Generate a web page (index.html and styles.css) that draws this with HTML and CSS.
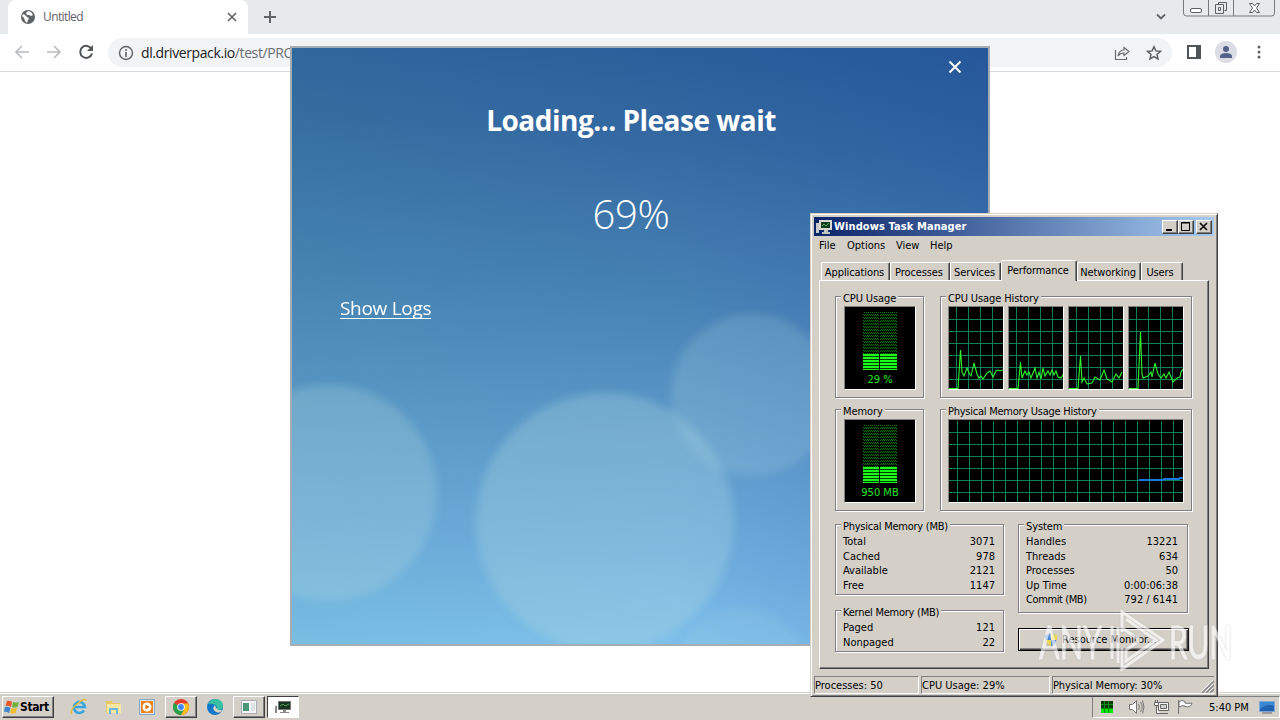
FILE: index.html
```html
<!DOCTYPE html>
<html lang="en">

<head>
    <meta charset="UTF-8">
    <meta name="viewport" content="width=device-width, initial-scale=1.0">
    <title>Untitled</title>
    <link rel="stylesheet" href="styles.css">
</head>

<body>
    <!-- Browser -->
    <div class="tab-strip">
        <div class="browser-tab">
            <svg class="globe" width="16" height="16" viewBox="0 0 16 16">
                <circle cx="8" cy="8" r="7" fill="#5f6368"/>
                <path d="M3 5l2 1 2 2 2 1-1 2-1 3-2-2-1-3-2-2zM8 2l3 1 2 3-2 1-2-1-2 0-1-2z" fill="#fff"/>
            </svg>
            <span class="tab-title">Untitled</span>
            <svg width="10" height="10" viewBox="0 0 10 10"><path d="M1 1l8 8M9 1L1 9" stroke="#5f6368" stroke-width="1.600"/></svg>
        </div>
        <svg class="new-tab" width="14" height="14" viewBox="0 0 14 14"><path d="M7 1v12M1 7h12" stroke="#5f6368" stroke-width="2"/></svg>
        <svg class="tab-search" width="12" height="8" viewBox="0 0 12 8"><path d="M2 1.500l4 4 4-4" fill="none" stroke="#5f6368" stroke-width="1.800"/></svg>
        <div class="caption-buttons">
            <svg width="92" height="17" viewBox="0 0 92 17" fill="none" stroke="#77797c">
                <path d="M.500 0v13q0 3 3 3h85q3 0 3-3V0M25.500 0v16M50.500 0v16"/>
                <rect x="7.500" y="8.500" width="11" height="4" rx="1.500" fill="#fff" stroke="#5a5d63"/>
                <path d="M35.500 4.500v-2h8v8h-2M32.500 4.500h8v9h-8zM35.500 7.500h2v3h-2z" stroke="#5a5d63"/>
                <path d="M66.500 3.500h3l2 2.500 2-2.500h3l-3 4.500 3 4.500h-3l-2-2.500-2 2.500h-3l3-4.500z" fill="#fff" stroke="#5a5d63"/>
            </svg>
        </div>
    </div>
    <div class="toolbar">
        <svg width="16" height="16" viewBox="0 0 16 16"><path d="M15 8H2M8 2L2 8l6 6" fill="none" stroke="#babcbe" stroke-width="1.700"/></svg>
        <svg width="16" height="16" viewBox="0 0 16 16"><path d="M1 8h13M8 2l6 6-6 6" fill="none" stroke="#babcbe" stroke-width="1.700"/></svg>
        <svg width="16" height="16" viewBox="0 0 16 16"><path d="M13.500 5A6 6 0 1 0 14 9.500" fill="none" stroke="#505357" stroke-width="2"/><path d="M15 1v6H9z" fill="#505357"/></svg>
        <div class="address">
            <svg width="16" height="16" viewBox="0 0 16 16"><circle cx="8" cy="8" r="6.500" fill="none" stroke="#5f6368" stroke-width="1.400"/><path d="M8 7v5M8 4v1.700" stroke="#5f6368" stroke-width="1.600"/></svg>
            <span class="url">dl.driverpack.io<span>/test/PRO</span></span>
            <svg class="share" width="16" height="16" viewBox="0 0 16 16" fill="none" stroke="#66696e" stroke-width="1.200"><path d="M1.500 5v9.500h11V12"/><path d="M4 11q1-6 6-6V2.500l5 4-5 4V8q-4 0-6 3z"/></svg>
            <svg width="16" height="16" viewBox="0 0 16 16"><path d="M8 1.700l1.900 4.200 4.500.5-3.400 3 1 4.500L8 11.600l-4 2.300 1-4.500-3.400-3 4.500-.5z" fill="none" stroke="#5f6368" stroke-width="1.500"/></svg>
        </div>
        <svg class="side-panel" width="14" height="14" viewBox="0 0 14 14"><rect x="1" y="1" width="12" height="12" fill="none" stroke="#505357" stroke-width="2"/><path d="M9 1h4v12H9z" fill="#505357"/></svg>
        <svg class="profile" width="22" height="22" viewBox="0 0 22 22"><circle cx="11" cy="11" r="11" fill="#dadde3"/><circle cx="11" cy="8" r="3" fill="#53618a"/><path d="M5 17v-1.500q0-3.500 6-3.500t6 3.500V17z" fill="#53618a"/></svg>
        <svg width="4" height="14" viewBox="0 0 4 14" fill="#5f6368"><circle cx="2" cy="2" r="1.500"/><circle cx="2" cy="7" r="1.500"/><circle cx="2" cy="12" r="1.500"/></svg>
    </div>

    <!-- DriverPack window -->
    <div class="loader">
        <svg class="bubbles" width="696" height="596" viewBox="0 0 696 596">
            <defs>
                <filter id="soft"><feGaussianBlur stdDeviation="4"/></filter>
            </defs>
            <g fill="#b0dbe0" filter="url(#soft)">
                <circle cx="37" cy="445" r="108" opacity=".27"/>
                <circle cx="313" cy="474" r="129" opacity=".3"/>
                <circle cx="460" cy="347" r="81" opacity=".2"/>
                <circle cx="450" cy="625" r="65" opacity=".14"/>
            </g>
        </svg>
        <svg class="loader-close" width="14" height="14" viewBox="0 0 14 14"><path d="M1.500 1.500l11 11M12.500 1.500l-11 11" stroke="#fff" stroke-width="1.900"/></svg>
        <h1>Loading... Please wait</h1>
        <div class="percent">69%</div>
        <a class="show-logs">Show Logs</a>
    </div>

    <!-- Task Manager window -->
    <div class="task-manager">
        <div class="title-bar">
            <svg width="16" height="16" viewBox="0 0 16 16"><path d="M0 4h3v10H0z" fill="#c8ccc8"/><path d="M3 1h13v10H3z" fill="#d8d8d0"/><path d="M5 3h9v6H5z" fill="#123c20"/><path d="M6 7l2-2 2 2 3-3" stroke="#4fa65c" fill="none"/><path d="M8 11h4v2h2v2H6v-2h2z" fill="#c0c4c0"/></svg>
            <span class="title">Windows Task Manager</span>
            <div class="win-btn"><svg width="13" height="11" viewBox="0 0 13 11"><path d="M3 9h6" stroke="#000" stroke-width="2"/></svg></div>
            <div class="win-btn"><svg width="13" height="11" viewBox="0 0 13 11"><path d="M2.500 1.500h8v8h-8zM2 2h9" stroke="#000" fill="none"/></svg></div>
            <div class="win-btn close"><svg width="13" height="11" viewBox="0 0 13 11"><path d="M3 2l7 7M10 2L3 9" stroke="#000" stroke-width="1.600"/></svg></div>
        </div>
        <div class="menu">
            <span class="m-file">File</span>
            <span class="m-options">Options</span>
            <span class="m-view">View</span>
            <span class="m-help">Help</span>
        </div>
        <div class="tabs">
            <div class="tab t-app">Applications</div>
            <div class="tab t-proc">Processes</div>
            <div class="tab t-serv">Services</div>
            <div class="tab active">Performance</div>
            <div class="tab t-net">Networking</div>
            <div class="tab t-users">Users</div>
        </div>
        <div class="panel">
            <div class="graphs">
                <div class="group">
                    <div class="legend">CPU Usage</div>
                    <div class="screen meter">
                        <div class="bars"><div class="fill"></div></div>
                        <span>29 %</span>
                    </div>
                </div>
                <div class="group">
                    <div class="legend">CPU Usage History</div>
                    <div class="charts">
                        <div class="screen"><svg width="54" height="82" viewBox="0 0 54 82">
                            <path class="grid" d="M7.500 0v82M19.500 0v82M31.500 0v82M43.500 0v82M0 12.500h54M0 24.500h54M0 36.500h54M0 48.500h54M0 60.500h54M0 72.500h54"/>
                            <path class="line" d="M0 81.500H9L11.500 43l1.500 22 2 4 3-8 2 5 2 3 3-13 3 11 2 4 2-2 2 3 4-6 3-2 3 6 3-6 2-1 2 1 3-1"/>
                        </svg></div>
                        <div class="screen"><svg width="54" height="82" viewBox="0 0 54 82">
                            <path class="grid" d="M7.500 0v82M19.500 0v82M31.500 0v82M43.500 0v82M0 12.500h54M0 24.500h54M0 36.500h54M0 48.500h54M0 60.500h54M0 72.500h54"/>
                            <path class="line" d="M0 81.500H9L11.500 55l1.500 16 3-7 2 4 2-3 2 6 2-5 2-5 2 10 2-6 2 7 2-11 2 8 3-5 2 4 2-5 2 5 2-4 2 6 3 1 2-3 1-3"/>
                        </svg></div>
                        <div class="screen"><svg width="54" height="82" viewBox="0 0 54 82">
                            <path class="grid" d="M7.500 0v82M19.500 0v82M31.500 0v82M43.500 0v82M0 12.500h54M0 24.500h54M0 36.500h54M0 48.500h54M0 60.500h54M0 72.500h54"/>
                            <path class="line" d="M0 81.500H9L11.500 49l1.500 26 2-4 3 6 5-1 3-6 5 3 4-10 3 9 5 3 4-8 3 4 3-6"/>
                        </svg></div>
                        <div class="screen"><svg width="54" height="82" viewBox="0 0 54 82">
                            <path class="grid" d="M7.500 0v82M19.500 0v82M31.500 0v82M43.500 0v82M0 12.500h54M0 24.500h54M0 36.500h54M0 48.500h54M0 60.500h54M0 72.500h54"/>
                            <path class="line" d="M0 81.500H9L11.500 25l1.500 42 1 4 5-2 3-4 1 5 3-14 3 11 3 4 3-4 2 4 3-6 4 10 4-4 3-1 1-5 2-3"/>
                        </svg></div>
                    </div>
                </div>
                <div class="group">
                    <div class="legend">Memory</div>
                    <div class="screen meter">
                        <div class="bars"><div class="fill"></div></div>
                        <span>950 MB</span>
                    </div>
                </div>
                <div class="group">
                    <div class="legend tight">Physical Memory Usage History</div>
                    <div class="screen"><svg width="234" height="82" viewBox="0 0 234 82">
                        <defs>
                            <pattern id="cells" x="8" y="12" width="12" height="12" patternUnits="userSpaceOnUse"><path d="M.5 0v12M0 .5h12" stroke="#0a8055"/></pattern>
                        </defs>
                        <rect y="1" width="234" height="81" fill="url(#cells)"/>
                        <path d="M190 60h24l1-1h15l1-1h3" fill="none" stroke="#1878e0" stroke-width="2"/>
                    </svg></div>
                </div>
            </div>
            <div class="details">
                <div class="column">
                    <div class="group stats">
                        <div class="legend tight">Physical Memory (MB)</div>
                        <div class="row"><span>Total</span><span>3071</span></div>
                        <div class="row"><span>Cached</span><span>978</span></div>
                        <div class="row"><span>Available</span><span>2121</span></div>
                        <div class="row"><span>Free</span><span>1147</span></div>
                    </div>
                    <div class="group stats kernel">
                        <div class="legend tight">Kernel Memory (MB)</div>
                        <div class="row"><span>Paged</span><span>121</span></div>
                        <div class="row"><span>Nonpaged</span><span>22</span></div>
                    </div>
                </div>
                <div class="column">
                    <div class="group stats system">
                        <div class="legend">System</div>
                        <div class="row"><span>Handles</span><span>13221</span></div>
                        <div class="row"><span>Threads</span><span>634</span></div>
                        <div class="row"><span>Processes</span><span>50</span></div>
                        <div class="row"><span>Up Time</span><span>0:00:06:38</span></div>
                        <div class="row"><span class="commit">Commit (MB)</span><span>792 / 6141</span></div>
                    </div>
                    <div class="monitor-btn">
                        <svg width="14" height="16" viewBox="0 0 14 16"><path d="M7 1q3 2 6 2 0 9-6 12Q1 12 1 3q3 0 6-2z" fill="#3d7edb"/><path d="M7 1q3 2 6 2v5H7zM1.500 8H7v7Q3 13 1.500 8z" fill="#efd84a"/></svg>
                        Resource Monitor...
                    </div>
                </div>
            </div>
        </div>
        <div class="status">
            <div class="s-proc">Processes: 50</div>
            <div class="s-cpu">CPU Usage: 29%</div>
            <div class="s-mem">
                <span>Physical Memory: 30%</span>
                <svg width="13" height="13" viewBox="0 0 13 13"><path d="M1 13L13 1M5 13l8-8M9 13l4-4" stroke="#808080" stroke-width="1.500"/><path d="M0 12L12 0M4 12l8-8M8 12l4-4" stroke="#fff"/></svg>
            </div>
        </div>
    </div>

    <!-- Taskbar -->
    <div class="taskbar">
        <div class="start">
            <svg width="16" height="16" viewBox="0 0 16 16"><path d="M3 2q3-1 5 1L7 8Q4 6 1.500 7z" fill="#e8562a"/><path d="M9 3q3 1 6 0l-1.500 5Q10 9 8 8z" fill="#72b03c"/><path d="M1 8q3-1 5.500 1L5 14q-3-2-5-1z" fill="#3f86d0"/><path d="M7.500 9q3 1 5.500 0l-1.500 5q-3 1-5.500 0z" fill="#f2bd2c"/></svg>
            <span>Start</span>
        </div>
        <div class="task">
            <svg width="18" height="18" viewBox="0 0 18 18"><path d="M14 12.500a5.500 5.500 0 1 1 .9-3.500H5" fill="none" stroke="#35a5e0" stroke-width="2.600"/><path d="M2 16Q-1 13 7 6t9-3" fill="none" stroke="#e5bb3e" stroke-width="1.500"/></svg>
        </div>
        <div class="task">
            <svg width="17" height="16" viewBox="0 0 17 16"><path d="M1 2h6l1 2h7v10H1z" fill="#e9c765"/><path d="M2 5h14v9H2z" fill="#f8e7a2"/><path d="M4 15V9h9v6h-2v-4H6v4z" fill="#6fb7de"/></svg>
        </div>
        <div class="task">
            <svg width="16" height="16" viewBox="0 0 16 16"><path d="M.5.500h15v15H.5z" fill="#d7e6f5" stroke="#85a9cc"/><path d="M2 2h12v12H2z" fill="#f08319"/><circle cx="8" cy="8" r="4.500" fill="#fff"/><path d="M6.500 5.500v5L10.500 8z" fill="#e86d10"/></svg>
        </div>
        <div class="task raised">
            <svg width="16" height="16" viewBox="0 0 16 16"><circle cx="8" cy="8" r="8" fill="#e33b2e"/><path d="M1.070 4A8 8 0 0 0 8 16l3.500-6z" fill="#2ba24c"/><path d="M15 4.500A8 8 0 0 1 8 16l3.500-6L8 4.500z" fill="#fbc116"/><circle cx="8" cy="8" r="3.800" fill="#fff"/><circle cx="8" cy="8" r="2.900" fill="#4285f4"/></svg>
        </div>
        <div class="task">
            <svg width="16" height="16" viewBox="0 0 16 16"><circle cx="8" cy="8" r="8" fill="#1377c9"/><path d="M1 5q3-5 8-5 7 1 7 7 0 4-4 4-4 0-2-3Q8 4 1 5z" fill="#38c1a0"/><path d="M8 6q-4 4 1 7 3 1 5 0l1-2q-6 1-7-5z" fill="#d4d0c8"/></svg>
        </div>
        <div class="task raised">
            <svg width="16" height="14" viewBox="0 0 16 14"><path d="M.5.500h15v13H.5z" fill="#f4f6f7" stroke="#a8adb3"/><path d="M2 3h6v8H2z" fill="#4a9478"/><path d="M10 3h4v8h-4z" fill="#dde1e4"/></svg>
        </div>
        <div class="task pressed">
            <svg width="16" height="16" viewBox="0 0 16 16"><path d="M0 7h2v7H0z" fill="#888"/><path d="M3 2h13v9H3z" fill="#777"/><path d="M4 3h11v7H4z" fill="#17331f"/><path d="M5 7l3-2 2 2 4-2" stroke="#4fa65c" fill="none"/><path d="M8 11h3v2h3v1H5v-1h3z" fill="#888"/></svg>
        </div>
        <div class="tray">
            <svg width="12" height="12" viewBox="0 0 12 12"><path d="M0 0h12v12H0z" fill="#063b06"/><path d="M0 8h12v4H0z" fill="#00e800"/><path d="M3.500 0v12M7.500 0v12M0 3.500h12M0 7.500h12" stroke="#058a10"/></svg>
            <svg class="speaker" width="17" height="16" viewBox="0 0 17 16" fill="none" stroke="#777"><path d="M1.500 5.500h3l4-4v13l-4-4h-3z" fill="#fff"/><path d="M10.500 5q2 3 0 6M12.500 3q3.500 5 0 10M14.500 1.500q3 6.500 0 13"/></svg>
            <svg width="17" height="16" viewBox="0 0 17 16" fill="#f3f3f3" stroke="#666"><path d="M5.500 3.500h10v8h-10zM7 14.500h8M1.500 3.500h4v3h-4zM3.500 7v7.500H7M2.500 1v2M4.500 1v2"/><path d="M7.500 5.500h6v4h-6z" fill="#d0d0d0"/></svg>
            <svg class="flag" width="17" height="16" viewBox="0 0 17 16" fill="#fafafa" stroke="#777"><path d="M1.500 1v14M2 2.500q3-2 6 0v1.500q3 1 7 0-1 5-7 3.500V7q-3-1-6 1z"/></svg>
            <span class="clock">5:40 PM</span>
            <svg width="16" height="13" viewBox="0 0 16 13"><path d="M.5.500h15v10H.5z" fill="#2260b0" stroke="#79a5d8"/><path d="M1 8Q8 2 15 5V1H1z" fill="#3d8ad4"/><path d="M3 12h10" stroke="#666"/></svg>
        </div>
    </div>

    <!-- Watermark -->
    <svg class="watermark" width="210" height="68" viewBox="0 0 210 68">
        <text x="1" y="50" textLength="63" lengthAdjust="spacingAndGlyphs">ANY</text>
        <path d="M74 50V17M80 54V18M84 23V3l41 28-41 29V39M88 10l30 21-30 21V41l14-10-18-12" fill="none" stroke="#fff" stroke-width="3"/>
        <text x="131" y="50" textLength="63" lengthAdjust="spacingAndGlyphs">RUN</text>
    </svg>
</body>

</html>
```
FILE: styles.css
```css
* {
    box-sizing: border-box;
}

body {
    margin: 0;
    width: 1280px;
    height: 720px;
    overflow: hidden;
    position: relative;
    background-color: #fff;
    font-family: "DejaVu Sans Condensed", "DejaVu Sans", sans-serif;
    font-size: 11px;
    color: #000;
    white-space: nowrap;
}

svg {
    display: block;
    flex-shrink: 0;
}

/* Browser */
.tab-strip {
    height: 34px;
    background-color: #e7eaed;
    display: flex;
    align-items: center;
}

.browser-tab {
    width: 240px;
    height: 34px;
    margin-left: 8px;
    padding: 0 11px 0 12px;
    background-color: #fff;
    border-radius: 8px 8px 0 0;
    display: flex;
    align-items: center;
}

.tab-title {
    flex: 1;
    margin-left: 7px;
    margin-top: -1px;
    font-family: "Open Sans", sans-serif;
    font-size: 12px;
    letter-spacing: -0.6px;
    color: #5f6368;
}

.new-tab {
    margin-left: 15px;
}

.tab-search {
    margin-left: auto;
}

.caption-buttons {
    margin-left: 16px;
    margin-right: 5px;
    height: 34px;
}

.toolbar {
    height: 38px;
    border-bottom: 1px solid #d8dadc;
    padding: 0 19px 0 14px;
    display: flex;
    align-items: center;
    gap: 16px;
}

.toolbar > svg {
    margin-top: -1px;
}

.address {
    width: 1064px;
    height: 29px;
    margin-left: -2px;
    padding: 0 10px;
    border-radius: 15px;
    background-color: #f1f3f4;
    display: flex;
    align-items: center;
}

.url {
    margin-left: 7px;
    font-family: "Open Sans", sans-serif;
    font-size: 14px;
    letter-spacing: -0.4px;
    color: #202124;
}

.url span {
    color: #6a6d72;
}

.share {
    margin-left: auto;
    margin-right: 16px;
}

.side-panel {
    margin-left: -1px;
}

.profile {
    margin-left: -2px;
    margin-right: 4px;
}

/* DriverPack window */
.loader {
    position: absolute;
    left: 290px;
    top: 46px;
    width: 700px;
    height: 600px;
    border: 2px solid #a5acb2;
    background: linear-gradient(90deg, rgba(60, 140, 150, 0.13), rgba(60, 90, 190, 0) 55%, rgba(15, 50, 160, 0.13)),
        linear-gradient(184deg, #285c99 0%, #3469a2 18%, #4580b3 40%, #5d99ca 63%, #6fadde 82%, #82c5ee 100%);
    color: #fff;
    font-family: "Open Sans", sans-serif;
    padding: 50px 48px;
    overflow: hidden;
}

.bubbles {
    position: absolute;
    left: 0;
    top: 0;
}

.loader-close {
    position: absolute;
    right: 26px;
    top: 12px;
}

.loader h1 {
    position: relative;
    margin: 0;
    padding-right: 18px;
    text-align: center;
    font-size: 28px;
    line-height: 44px;
    font-weight: 700;
    letter-spacing: -0.5px;
}

.percent {
    position: relative;
    margin-top: 45px;
    padding-right: 18px;
    text-align: center;
    font-size: 40px;
    line-height: 54px;
    font-weight: 300;
    letter-spacing: -0.3px;
}

.show-logs {
    display: inline-block;
    position: relative;
    margin-top: 57px;
    font-size: 19px;
    line-height: 20px;
    letter-spacing: -0.3px;
    border-bottom: 1px solid #fff;
}

/* Task Manager */
.task-manager {
    position: absolute;
    z-index: 2;
    left: 810px;
    top: 213px;
    width: 408px;
    height: 484px;
    padding: 2px 3px;
    background-color: #d4d0c8;
    border: 1px solid;
    border-color: #d4d0c8 #404040 #404040 #d4d0c8;
    box-shadow: inset 1px 1px 0 #fff, inset -1px -1px 0 #808080;
}

.title-bar {
    height: 19px;
    margin-top: 1px;
    padding: 0 2px;
    background: linear-gradient(90deg, #0a246a, #a6caf0);
    display: flex;
    align-items: center;
}

.title {
    flex: 1;
    margin-left: 2px;
    color: #fff;
    font-weight: bold;
    letter-spacing: 0.1px;
}

.win-btn {
    width: 16px;
    height: 14px;
    background-color: #d4d0c8;
    border: 1px solid;
    border-color: #fff #404040 #404040 #fff;
    box-shadow: inset -1px -1px 0 #808080;
}

.close {
    margin-left: 2px;
}

.menu {
    display: flex;
    height: 18px;
    line-height: 19px;
    padding-left: 5px;
}

.m-file {
    width: 28px;
}

.m-options {
    width: 49px;
}

.m-view {
    width: 34px;
}

.tabs {
    display: flex;
    align-items: flex-end;
    height: 26px;
    padding-left: 7px;
}

.tab {
    height: 18px;
    line-height: 19px;
    padding-right: 2px;
    text-align: center;
    letter-spacing: -0.1px;
    border: 1px solid;
    border-color: #fff #404040 transparent #fff;
    border-bottom: none;
    border-radius: 2px 2px 0 0;
    box-shadow: inset -1px 0 0 #808080;
}

.t-app {
    width: 69px;
}

.t-proc {
    width: 60px;
}

.t-serv {
    width: 51px;
}

.active {
    position: relative;
    width: 76px;
    height: 21px;
    margin-bottom: -1px;
    background-color: #d4d0c8;
}

.t-net {
    width: 64px;
}

.t-users {
    width: 42px;
    padding-right: 4px;
}

.panel {
    width: 390px;
    height: 389px;
    margin-left: 5px;
    padding: 15px 0 0 15px;
    border: 1px solid;
    border-color: #fff #404040 #404040 #fff;
    box-shadow: inset -1px -1px 0 #808080;
}

.graphs {
    display: grid;
    grid-template-columns: 89px 252px;
    grid-template-rows: 102px 102px;
    gap: 11px 16px;
}

.group {
    position: relative;
    padding: 9px 7px;
    border: 1px solid #808080;
    box-shadow: inset 1px 1px 0 #fff, 1px 1px 0 #fff;
}

.legend {
    position: absolute;
    left: 5px;
    top: -5px;
    line-height: 14px;
    padding: 0 2px;
    background-color: #d4d0c8;
    letter-spacing: -0.1px;
}

.tight {
    letter-spacing: -0.25px;
}

.screen {
    height: 84px;
    background-color: #000;
    border: 1px solid;
    border-color: #808080 #fff #fff #808080;
}

.charts {
    display: grid;
    grid-template-columns: repeat(4, 56px);
    gap: 4px;
}

.grid {
    fill: none;
    stroke: #0a8055;
}

.line {
    fill: none;
    stroke: #2ff52f;
    stroke-width: 1.1;
}

.meter {
    width: 72px;
    margin-left: 1px;
    padding-top: 5px;
    color: #21e321;
    text-align: center;
    display: flex;
    flex-direction: column;
    align-items: center;
}

.meter span {
    line-height: 20px;
}

.bars {
    width: 34px;
    height: 58px;
    padding-top: 42px;
    background: linear-gradient(90deg, transparent 16px, #000 16px, #000 17px, transparent 17px),
        conic-gradient(#0b7d0b 25%, #000 0 50%, #0b7d0b 0 75%, #000 0) 0 0 / 2px 3px;
}

.fill {
    height: 16px;
    background: linear-gradient(90deg, transparent 16px, #000 16px, #000 17px, transparent 17px),
        repeating-linear-gradient(#1aff1a 0 2px, #053c05 2px 3px);
}

.details {
    display: flex;
    gap: 14px;
    margin-top: 13px;
}

.column {
    width: 169px;
}

.stats {
    height: 71px;
    padding: 10px 8px 0 7px;
}

.row {
    display: flex;
    justify-content: space-between;
    height: 14.5px;
    line-height: 14px;
}

.commit {
    letter-spacing: -0.4px;
}

.kernel {
    height: 42px;
    margin-top: 15px;
}

.system {
    width: 170px;
    height: 89px;
    padding-right: 9px;
}

.monitor-btn {
    display: flex;
    align-items: center;
    gap: 4px;
    width: 171px;
    height: 23px;
    margin-top: 15px;
    padding-left: 25px;
    border: 1px solid #000;
    box-shadow: inset 1px 1px 0 #fff, inset -1px -1px 0 #404040, inset -2px -2px 0 #808080;
}

.status {
    display: flex;
    gap: 2px;
    margin-top: 7px;
}

.status > div {
    height: 18px;
    line-height: 17px;
    border: 1px solid;
    border-color: #808080 #fff #fff #808080;
}

.s-proc {
    width: 105px;
}

.s-cpu {
    width: 129px;
}

.status .s-mem {
    flex: 1;
    display: flex;
    justify-content: space-between;
    align-items: flex-end;
    border-right: none;
}

.s-mem span {
    align-self: flex-start;
    letter-spacing: -0.1px;
}

/* Taskbar */
.taskbar {
    position: absolute;
    left: 0;
    bottom: 0;
    width: 1280px;
    height: 28px;
    padding: 3px 0 2px 2px;
    background-color: #d4d0c8;
    border-top: 1px solid #d4d0c8;
    box-shadow: inset 0 1px 0 #fff;
    display: flex;
    align-items: center;
}

.start,
.raised {
    border: 1px solid;
    border-color: #fff #404040 #404040 #fff;
    box-shadow: inset -1px -1px 0 #808080;
}

.start {
    width: 52px;
    height: 22px;
    margin-right: 9px;
    padding-left: 1px;
    display: flex;
    align-items: center;
    font-size: 12px;
    font-weight: bold;
    letter-spacing: -0.4px;
}

.task {
    width: 32px;
    height: 22px;
    margin-right: 2px;
    display: flex;
    align-items: center;
    justify-content: center;
}

.pressed {
    background-color: #fff;
    border: 1px solid;
    border-color: #404040 #fff #fff #404040;
}

.tray {
    width: 188px;
    height: 22px;
    margin-left: auto;
    padding: 0 4px 0 8px;
    border: 1px solid;
    border-color: #808080 #fff #fff #808080;
    display: flex;
    align-items: center;
}

.speaker {
    margin-left: 15px;
    margin-right: 8px;
}

.flag {
    margin-left: 7px;
}

.clock {
    margin-left: 15px;
    margin-right: auto;
}

.watermark {
    position: absolute;
    z-index: 3;
    left: 1038px;
    top: 609px;
    overflow: visible;
    opacity: 0.65;
    fill: #fff;
    font-family: Lato, sans-serif;
    font-size: 47px;
    filter: drop-shadow(0 0 1px #bbb);
}

.watermark text {
    stroke: #fff;
    stroke-width: 0.8px;
}
```
